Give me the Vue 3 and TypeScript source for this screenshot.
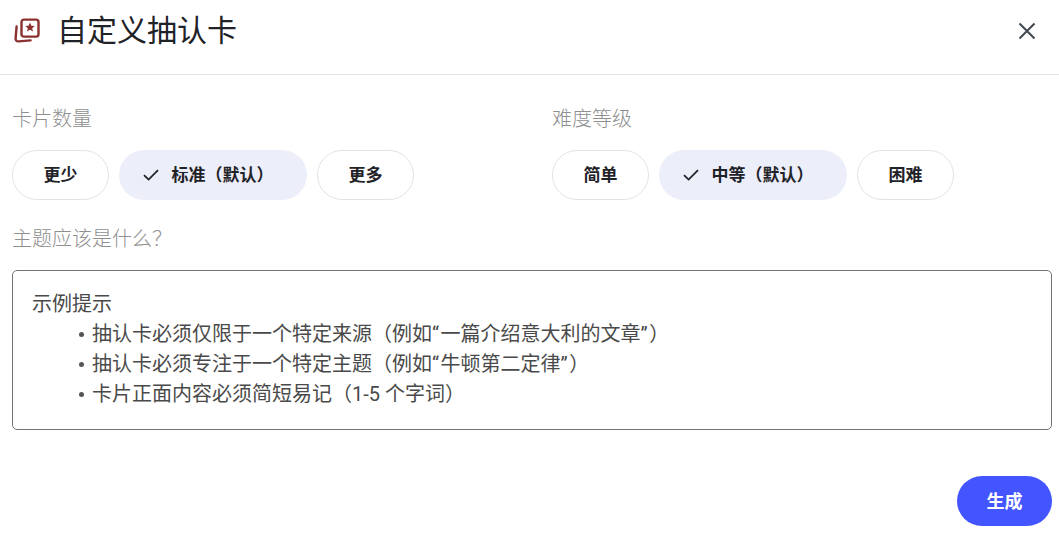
<script setup lang="ts">
const countOptions = [
  { label: '更少', selected: false },
  { label: '标准（默认）', selected: true },
  { label: '更多', selected: false },
];

const levelOptions = [
  { label: '简单', selected: false },
  { label: '中等（默认）', selected: true },
  { label: '困难', selected: false },
];

const groups = [
  { title: '卡片数量', options: countOptions },
  { title: '难度等级', options: levelOptions },
];

const hints = [
  '抽认卡必须仅限于一个特定来源（例如“一篇介绍意大利的文章”）',
  '抽认卡必须专注于一个特定主题（例如“牛顿第二定律”）',
  '卡片正面内容必须简短易记（1-5 个字词）',
];

// quotes are set wider than the rest of the text
const splitQuotes = (text: string) => text.split(/([“”])/);
const isQuote = (part: string) => part === '“' || part === '”';
</script>

<template>
  <div class="dialog">
    <header class="header">
      <svg class="logo" width="26" height="26" viewBox="0 0 26 26" fill="none">
        <path d="M2.6 8.4 1.6 20.4c-.1 2 1 3.2 3 3l12-1" stroke="#8c3030" stroke-width="2.4" stroke-linecap="round" />
        <rect x="7.5" y="1.6" width="17" height="17" rx="2.4" stroke="#8c3030" stroke-width="2.4" />
        <path d="m16 4.6 1.4 3.1 3.3.3-2.5 2.2.8 3.3-3-1.7-3 1.7.8-3.3-2.5-2.2 3.3-.3z" fill="#8c3030" />
      </svg>
      <h1 class="title">自定义抽认卡</h1>
      <svg class="close" width="18" height="18" viewBox="0 0 18 18" fill="none">
        <path d="M1.5 1.5 16.5 16.5M16.5 1.5 1.5 16.5" stroke="#444a52" stroke-width="2.1" />
      </svg>
    </header>

    <main class="body">
      <div class="groups">
        <section v-for="group in groups" :key="group.title" class="group">
          <div class="label">{{ group.title }}</div>
          <div class="chips">
            <button
              v-for="option in group.options"
              :key="option.label"
              class="chip"
              :class="{ selected: option.selected }"
            >
              <svg v-if="option.selected" class="check" width="16" height="12" viewBox="0 0 16 12" fill="none">
                <path d="M1 6.2 5.6 10.6 15 1.2" stroke="#1f2328" stroke-width="1.8" />
              </svg>
              {{ option.label }}
            </button>
          </div>
        </section>
      </div>

      <div class="label topic">主题应该是什么？</div>
      <div class="prompt">
        <div>示例提示</div>
        <ul>
          <li v-for="hint in hints" :key="hint">
            <span>
              <span v-for="(part, i) in splitQuotes(hint)" :key="i" :class="{ quote: isQuote(part) }">{{ part }}</span>
            </span>
          </li>
        </ul>
      </div>
    </main>

    <footer class="footer">
      <button class="generate">生成</button>
    </footer>
  </div>
</template>

<style>
html,
body {
  margin: 0;
  background: #fff;
}
</style>

<style scoped>
.dialog {
  width: 1059px;
  height: 538px;
  box-sizing: border-box;
  font-family: Roboto, 'Noto Sans CJK SC', sans-serif;
  color: #1f2328;
  overflow: hidden;
}

.header {
  display: flex;
  align-items: center;
  height: 75px;
  padding: 0 23px 13px 14px;
  box-sizing: border-box;
  border-bottom: 1px solid #e3e3e3;
}

.logo {
  flex: none;
  margin-right: 17px;
}

.title {
  margin: 0;
  font-size: 30px;
  font-weight: 400;
  line-height: 40px;
  flex: 1;
}

.body {
  padding: 29px 7px 0 12px;
}

.groups {
  display: flex;
}

.group {
  flex: none;
  width: 540px;
}

.label {
  font-size: 20px;
  line-height: 30px;
  color: #8f8f8f;
  font-weight: 300;
}

.chips {
  display: flex;
  gap: 10px;
  margin-top: 16px;
}

.chip {
  display: flex;
  align-items: center;
  justify-content: center;
  width: 97px;
  height: 50px;
  padding: 0 0 3px;
  border: 1px solid #e3e3e3;
  border-radius: 25px;
  background: #fff;
  font: 700 17px Roboto, 'Noto Sans CJK SC', sans-serif;
  color: #1f2328;
}

.chip.selected {
  width: 188px;
  padding: 0 10px 3px 0;
  border: none;
  background: #eceef9;
}

.check {
  margin-right: 13px;
  margin-top: 3px;
}

.topic {
  margin-top: 24px;
}

.prompt {
  margin-top: 16px;
  height: 160px;
  box-sizing: border-box;
  padding: 18px 19px;
  border: 1px solid #747474;
  border-radius: 5px;
  font-size: 20px;
  line-height: 30px;
  color: #4a4a4a;
}

.prompt ul {
  margin: 0;
  padding: 0 0 0 47px;
  list-style: none;
}

.prompt li {
  display: flex;
  align-items: center;
}

.prompt li::before {
  content: '';
  flex: none;
  width: 5px;
  height: 5px;
  margin-right: 8px;
  border-radius: 50%;
  background: #555;
}

.quote {
  letter-spacing: 1.5px;
}

.footer {
  display: flex;
  justify-content: flex-end;
  padding: 46px 7px 0 0;
}

.generate {
  width: 95px;
  height: 50px;
  padding: 0 0 2px;
  border: none;
  border-radius: 25px;
  background: #4355ff;
  color: #fff;
  font: 700 18px Roboto, 'Noto Sans CJK SC', sans-serif;
}
</style>
